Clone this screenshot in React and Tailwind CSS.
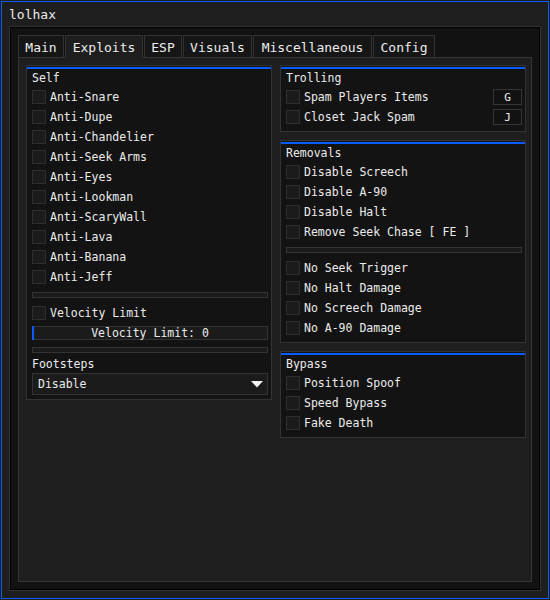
import React from "react";

const FONT = { fontFamily: '"DejaVu Sans Mono", "Liberation Mono", monospace' };

function Check({ label, bind }) {
  return (
    <div className="flex h-[20px] items-center gap-[4px]">
      <div className="h-[14px] w-[14px] shrink-0 border border-[#2e2e2e] bg-[#1b1b1b]" />
      <span className="relative top-[1px] whitespace-pre">{label}</span>
      {bind && (
        <div className="ml-auto flex h-[16px] w-[29px] items-center justify-center border border-[#343434] bg-[#121212] text-[11px]">
          <span className="relative top-[1px]">{bind}</span>
        </div>
      )}
    </div>
  );
}

function Sep({ className = "" }) {
  return <div className={"h-[6px] border border-[#333333] bg-[#1b1b1b] " + className} />;
}

function Group({ title, children, className = "" }) {
  return (
    <div className={"border border-[#333333] bg-[#131313] pl-[5px] pr-[3px] pb-[4px] " + className}>
      <div className="-ml-[5px] -mr-[3px] mt-[1px] h-[2px] bg-[#0b5cff]" />
      <div className="flex h-[18px] items-center">
        <span className="relative top-[1px]">{title}</span>
      </div>
      {children}
    </div>
  );
}

const tabs = [
  { name: "Main", w: "w-[46px]" },
  { name: "Exploits", w: "w-[78px]", active: true },
  { name: "ESP", w: "w-[38px]" },
  { name: "Visuals", w: "w-[69px]" },
  { name: "Miscellaneous", w: "w-[119px]" },
  { name: "Config", w: "w-[62px]" },
];

export default function App() {
  return (
    <div className="h-[600px] w-[550px] bg-[#1e1e1e] p-[1px] text-[#ececec]" style={FONT}>
      <div className="flex h-full flex-col border border-[#0b5cff] px-[7px] pb-[7px]">
        <div className="mb-[3px] mt-[5px] h-[16px] text-[13px] leading-[16px]">lolhax</div>
        <div className="flex flex-1 flex-col border border-[#333333]">
          <div className="flex flex-1 flex-col border border-black bg-[#121212] p-[7px]">
            <div className="flex h-[22px] items-start gap-[1px] text-[13px]">
              {tabs.map((t) => (
                <div
                  key={t.name}
                  className={
                    "flex items-center justify-center border border-b-0 border-[#333333] " +
                    t.w +
                    (t.active
                      ? " relative z-10 h-[23px] bg-[#1e1e1e] pb-[1px]"
                      : " h-[22px] bg-[#161616]")
                  }
                >
                  <span className="relative top-[1px]">{t.name}</span>
                </div>
              ))}
            </div>
            <div className="flex flex-1 items-start gap-[8px] border border-[#363636] bg-[#1e1e1e] pl-[7px] pt-[7px] text-[11.5px]">
              <Group title="Self" className="w-[246px]">
                <Check label="Anti-Snare" />
                <Check label="Anti-Dupe" />
                <Check label="Anti-Chandelier" />
                <Check label="Anti-Seek Arms" />
                <Check label="Anti-Eyes" />
                <Check label="Anti-Lookman" />
                <Check label="Anti-ScaryWall" />
                <Check label="Anti-Lava" />
                <Check label="Anti-Banana" />
                <Check label="Anti-Jeff" />
                <Sep className="mt-[5px]" />
                <div className="mt-[5px]">
                  <Check label="Velocity Limit" />
                </div>
                <div className="relative mt-[3px] flex h-[14px] items-center justify-center border border-[#333333] bg-[#1b1b1b]">
                  <div className="absolute left-[-1px] top-[-1px] h-[14px] w-[2px] bg-[#0b5cff]" />
                  <span className="relative top-[1px] whitespace-pre">Velocity Limit: 0</span>
                </div>
                <Sep className="mt-[7px]" />
                <div className="mt-[2px] flex h-[18px] items-center">
                  <span className="relative top-[1px]">Footsteps</span>
                </div>
                <div className="flex h-[22px] items-center justify-between border border-[#333333] bg-[#1b1b1b] pl-[5px] pr-[4px]">
                  <span className="relative top-[1px]">Disable</span>
                  <svg width="12" height="7" viewBox="0 0 12 7">
                    <polygon points="0,0 12,0 6,6.5" fill="#f2f2f2" />
                  </svg>
                </div>
              </Group>
              <div className="flex w-[246px] flex-col gap-[8px]">
                <Group title="Trolling">
                  <Check label="Spam Players Items" bind="G" />
                  <Check label="Closet Jack Spam" bind="J" />
                </Group>
                <Group title="Removals">
                  <Check label="Disable Screech" />
                  <Check label="Disable A-90" />
                  <Check label="Disable Halt" />
                  <Check label="Remove Seek Chase [ FE ]" />
                  <Sep className="mt-[5px]" />
                  <div className="mt-[5px]">
                    <Check label="No Seek Trigger" />
                    <Check label="No Halt Damage" />
                    <Check label="No Screech Damage" />
                    <Check label="No A-90 Damage" />
                  </div>
                </Group>
                <Group title="Bypass">
                  <Check label="Position Spoof" />
                  <Check label="Speed Bypass" />
                  <Check label="Fake Death" />
                </Group>
              </div>
            </div>
          </div>
        </div>
      </div>
    </div>
  );
}
